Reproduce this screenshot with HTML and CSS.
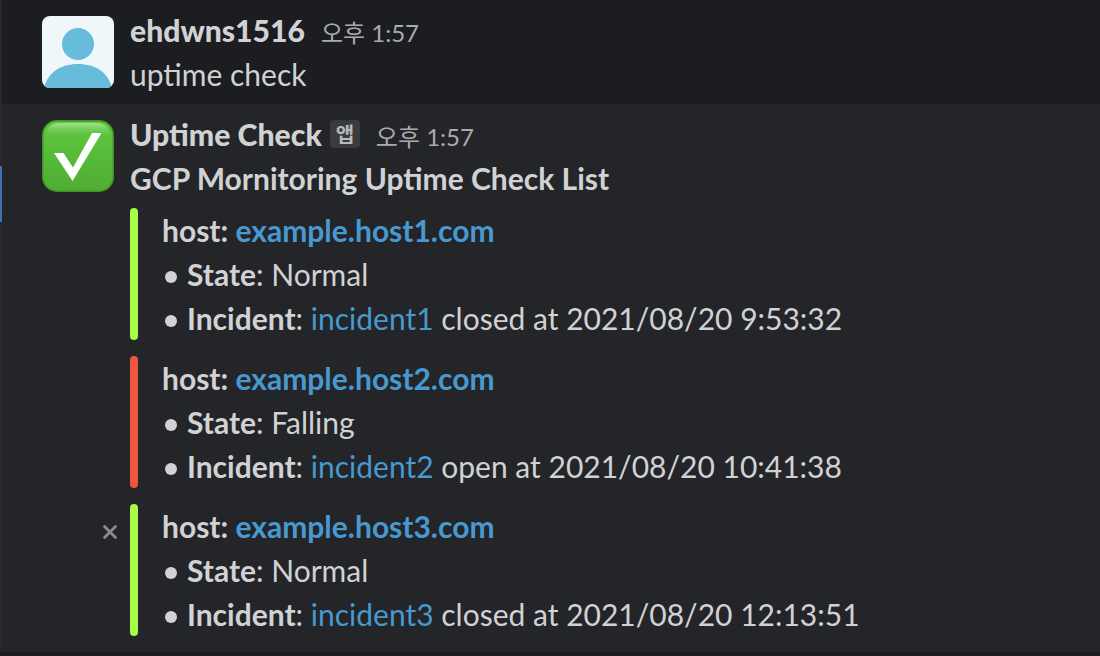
FILE: index.html
```html
<!DOCTYPE html>
<html lang="ko"><head><meta charset="utf-8"><title>Uptime Check</title><link rel="stylesheet" href="styles.css"></head>
<body>
<main class="chat">
<section class="message message-user">
<svg class="avatar" viewBox="0 0 72 72"><defs><clipPath id="r"><rect width="72" height="72" rx="8"/></clipPath></defs><g clip-path="url(#r)"><rect width="72" height="72" fill="#eff7fa"/><circle cx="36" cy="28" r="16" fill="#67bbdb"/><path d="M2 73C5 57 18 48 36 48s31 9 34 25z" fill="#67bbdb"/></g></svg>
<div class="content"><div class="head"><b class="name">ehdwns1516</b><time>오후 1:57</time></div><p class="line">uptime check</p></div>
</section>
<section class="message message-app">
<i class="edge"></i>
<svg class="avatar" viewBox="0 0 72 72"><defs><linearGradient id="g" x2="0" y2="1"><stop stop-color="#5fc840"/><stop offset="1" stop-color="#4fad33"/></linearGradient><linearGradient id="s" x2="0" y2="1"><stop stop-color="#a5e296"/><stop offset="1" stop-color="#5cc33e" stop-opacity="0"/></linearGradient></defs><rect width="72" height="72" rx="15" fill="#409425"/><rect x="1.500" y="1.500" width="69" height="69" rx="13.500" fill="url(#g)"/><path d="M4 18C4 8 9 3 18 3h36c9 0 14 5 14 15-3-3-7-4-12-4H16c-5 0-9 1-12 4z" fill="url(#s)"/><path d="M12 33h9.500l9.500 14.500L50 13h9.500L30.500 61z" fill="#fff"/></svg>
<div class="content"><div class="head"><b class="name">Uptime Check</b><span class="badge">앱</span><time>오후 1:57</time></div>
<p class="line"><b>GCP Mornitoring Uptime Check List</b></p>
<div class="cards">
<article class="card"><p class="line"><b>host: <a>example.host1.com</a></b></p><p class="line item"><b>State</b>: Normal</p><p class="line item"><b>Incident</b>: <a>incident1</a> closed at 2021/08/20 9:53:32</p></article>
<article class="card red"><p class="line"><b>host: <a>example.host2.com</a></b></p><p class="line item"><b>State</b>: Falling</p><p class="line item"><b>Incident</b>: <a>incident2</a> open at 2021/08/20 10:41:38</p></article>
<article class="card"><svg class="close" viewBox="0 0 16 16"><path d="M2.500 2.500l11 11M13.500 2.500l-11 11"/></svg><p class="line"><b>host: <a>example.host3.com</a></b></p><p class="line item"><b>State</b>: Normal</p><p class="line item"><b>Incident</b>: <a>incident3</a> closed at 2021/08/20 12:13:51</p></article>
</div></div>
</section>
</main>
</body></html>
```
FILE: styles.css
```css
* { box-sizing: border-box; }
body { margin: 0; background: #1c1d21; color: #d1d2d3; font: 30px/44px Lato, "Noto Sans CJK KR", sans-serif; }
.chat { height: 656px; overflow: hidden; }
.message { position: relative; display: flex; gap: 16px; padding: 16px 0 0 40px; border-left: 2px solid #27282c; }
.message-user { height: 104px; }
.message-app { height: 548px; background: #242529; }
.avatar { width: 72px; height: 72px; flex: none; }
.content { margin-top: -8px; flex: 1; }
.head { display: flex; height: 44px; }
.line { margin: 0; height: 44px; white-space: pre; }
b { font-weight: 700; }
.name { font-size: 30.2px; font-weight: 900; }
.message-user .name { font-size: 30.1px; }
time { margin-left: 16px; font-size: 24px; line-height: 49px; color: #ababad; }
.badge { width: 30px; height: 28px; margin: 8px 0 0 8px; border-radius: 4px; background: #3a3b3f; color: #b9babc; font-size: 20px; line-height: 28px; font-weight: 700; text-align: center; }
.cards { display: grid; gap: 16px; margin-top: 8px; }
.card { position: relative; height: 132px; padding-left: 32px; }
.card::before { content: ""; position: absolute; left: 0; top: 0; width: 8px; height: 132px; border-radius: 4px; background: #a8fb49; }
.red::before { background: #ee5640; }
a { color: #4799cf; }
.item { display: flex; align-items: center; }
.item::before { content: ""; width: 12px; height: 12px; margin: 5px 10px 0 3px; border-radius: 50%; background: #d1d2d3; }
.close { position: absolute; left: -28px; top: 20px; width: 16px; height: 16px; fill: none; stroke: #8b8c8e; stroke-width: 2.800; stroke-linecap: round; }
.edge { position: absolute; left: -2px; top: 62px; width: 2px; height: 56px; background: #3f72aa; }
```
